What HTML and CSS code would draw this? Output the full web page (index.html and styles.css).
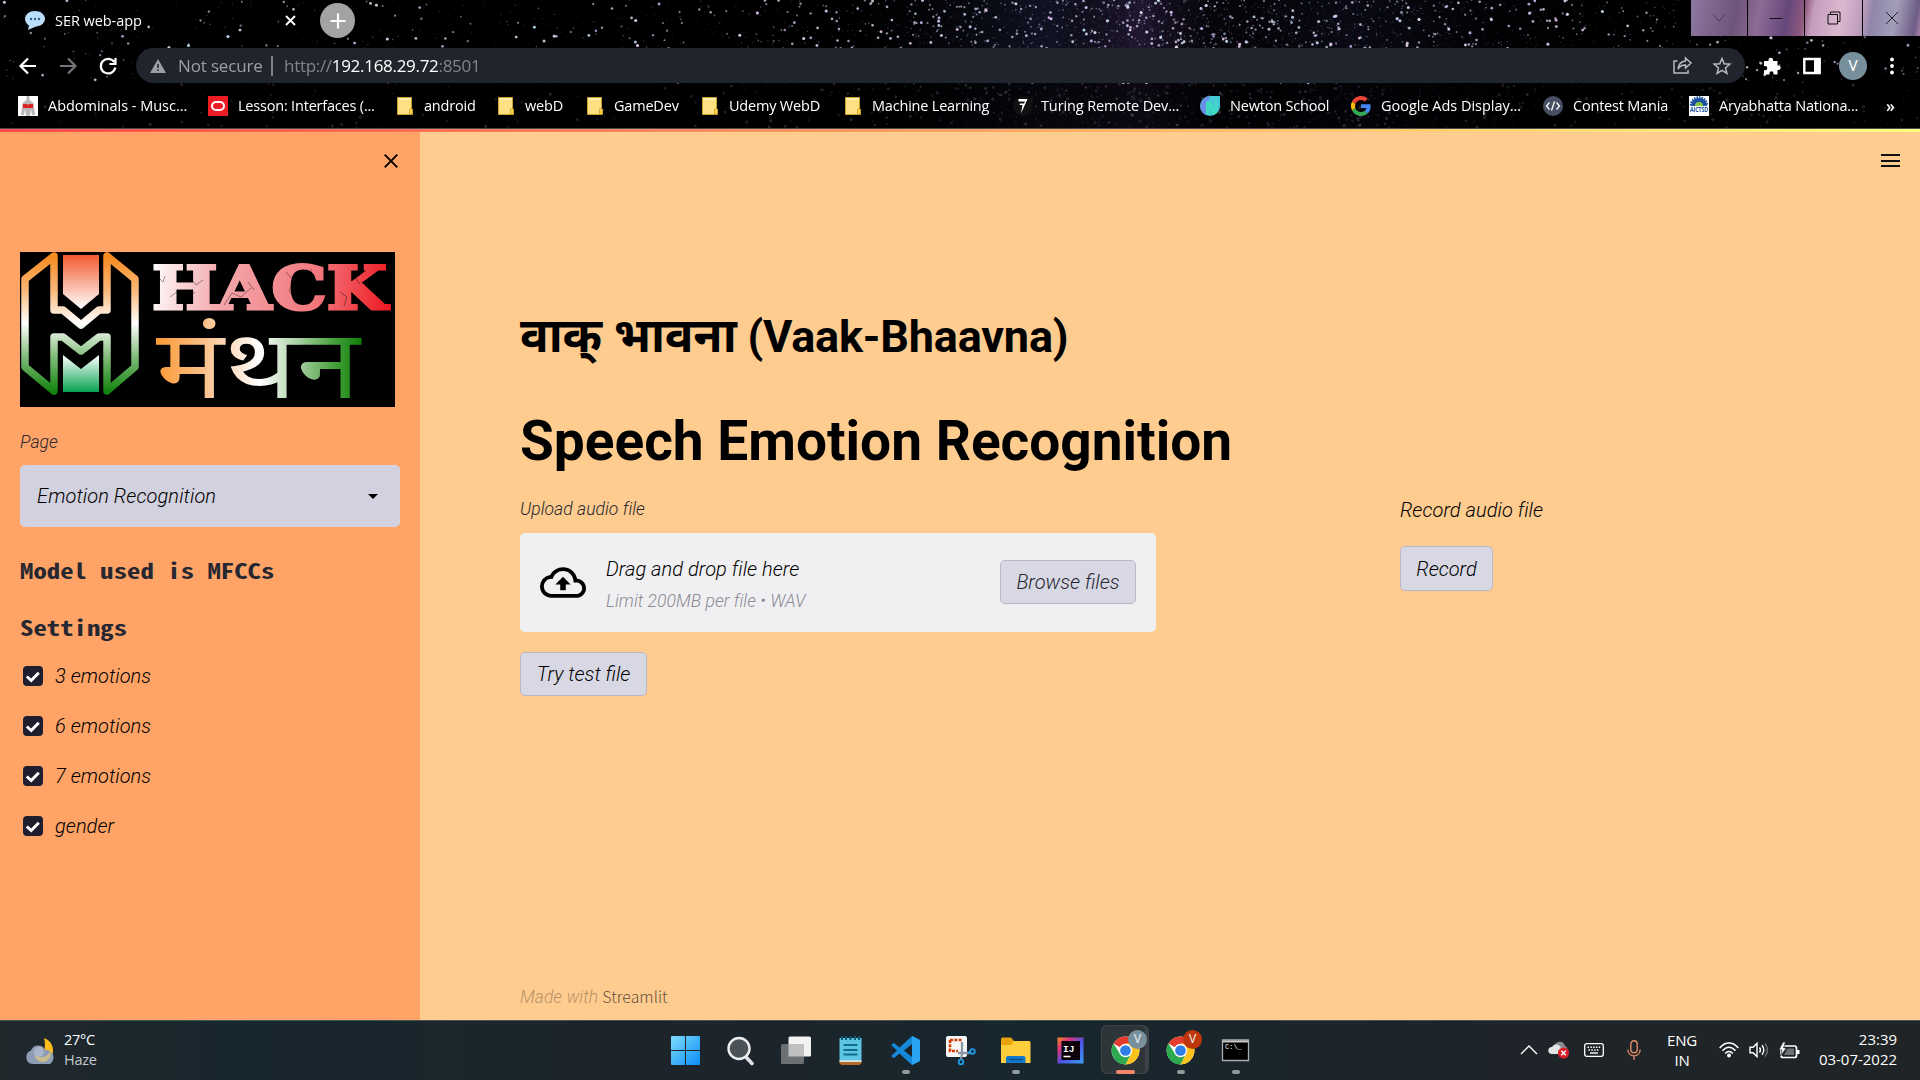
FILE: index.html
```html
<!DOCTYPE html>
<html lang="en">
<head>
<meta charset="utf-8">
<title>SER web-app</title>
<link rel="stylesheet" href="styles.css">
</head>
<body>
<svg class="defs" width="0" height="0" aria-hidden="true">
  <defs>
    <symbol id="folder" viewBox="0 0 16 18"><path d="M0.5 .5h14v11l1 1v5H.5z" fill="#ffe082" stroke="#c9a227"/><path d="M1 1h13v2H1z" fill="#ffeeb0"/><path d="M12.500 12v5h3v-5z" fill="#ffd54f" stroke="#b8901c" stroke-width=".6"/></symbol>
    <symbol id="check" viewBox="0 0 20 20"><rect width="20" height="20" rx="4" fill="#1e1e2f"/><path d="M3.800 10.500l4.400 4 7.600-7.800" fill="none" stroke="#fff" stroke-width="2.900"/></symbol>
    <symbol id="chrome" viewBox="0 0 48 48">
      <circle cx="24" cy="24" r="23" fill="#fff"/>
      <path d="M24 24 4.080 12.500A23 23 0 0 1 43.920 12.500L44 13.500H24z" fill="#e33b2e"/>
      <path d="M43.920 12.500A23 23 0 0 1 24 47L33.500 29.500 24 13.500V12.500z" fill="#fcc31e"/>
      <path d="M4.080 12.500A23 23 0 0 0 24 47L33.100 29.250 24 34.500 14.900 29.250z" fill="#2da94f"/>
      <circle cx="24" cy="24" r="11" fill="#fff"/><circle cx="24" cy="24" r="8.800" fill="#2f7de9"/>
    </symbol>
  </defs>
</svg>
<header class="browser">
  <canvas class="stars" id="stars" width="1920" height="128"></canvas>
  <div class="tabs">
    <div class="tab">
      <svg class="tab-icon" viewBox="0 0 20 19"><path d="M10 0c5.500 0 10 3.500 10 7.800s-4.500 7.700-9 7.700L3 19l1-4.500C1.500 13 0 10.500 0 7.800 0 3.500 4.500 0 10 0z" fill="#bbdefb"/><g fill="#2f5d8a"><circle cx="6" cy="8" r="1.200"/><circle cx="10" cy="8" r="1.200"/><circle cx="14" cy="8" r="1.200"/></g></svg>
      <span class="tab-title">SER web-app</span>
      <svg class="tab-close" viewBox="0 0 11 11"><path d="M1 1l9 9M10 1l-9 9" stroke="#fff" stroke-width="1.900"/></svg>
    </div>
    <div class="new-tab"><svg viewBox="0 0 16 16"><path d="M8 .5v15M.5 8h15" stroke="#fff" stroke-width="2.200"/></svg></div>
    <div class="window-buttons">
      <div class="wb"><svg viewBox="0 0 14 14"><path d="M1 3.500l6 6.500 6-6.500" /></svg></div>
      <div class="wb"><svg viewBox="0 0 14 14"><path d="M.5 7.500h13" /></svg></div>
      <div class="wb"><svg viewBox="0 0 14 14"><path d="M1 3.500h9.500V13H1zM3.500 3.500V1H13v9.500h-2.500"/></svg></div>
      <div class="wb"><svg viewBox="0 0 14 14"><path d="M1 1l12 12M13 1L1 13"/></svg></div>
    </div>
  </div>
  <div class="toolbar">
    <div class="nav">
      <svg viewBox="0 0 18 18"><path d="M17 9H2M9 1.500L1.500 9 9 16.500" stroke="#fff"/></svg>
      <svg viewBox="0 0 18 18"><path d="M1 9h15M9 1.500L16.500 9 9 16.500" stroke="#72757a"/></svg>
      <svg viewBox="0 0 18 18"><path d="M15.300 5.200A7.300 7.300 0 1 0 16.300 10.500M16.500 1v6h-6" stroke="#fff"/></svg>
    </div>
    <div class="omnibox">
      <svg class="warn" viewBox="0 0 16 14"><path d="M8 0l8 14H0z" fill="#9aa0a6"/><path d="M8 5v4M8 10.500v1.600" stroke="#20242c" stroke-width="1.500"/></svg>
      <span class="not-secure">Not secure</span>
      <span class="divider"></span>
      <span class="url">http://<b>192.168.29.72</b>:8501</span>
      <svg class="share" viewBox="0 0 19 17"><path d="M4.500 4H1v12h14v-3M12.500 1l5.500 5-5.500 5V8C8.500 8 6.500 9.500 5 12 5.500 7.500 8 4.500 12.500 4z"/></svg>
      <svg class="star" viewBox="0 0 18 18"><path d="M9 1.500l2.200 5.300 5.600.4-4.300 3.700 1.400 5.500L9 13.400l-4.900 3 1.400-5.500L1.200 7.200l5.600-.4z"/></svg>
    </div>
    <div class="actions">
      <svg viewBox="0 0 18 18"><path d="M1 4h4.500V3a2.300 2.300 0 0 1 4.600 0v1h4.400v4.500h1a2.200 2.200 0 0 1 0 4.400h-1V17.500H10.500v-1.200a2 2 0 0 0-4 0v1.200H1v-4.200h1.200a2.100 2.100 0 0 0 0-4.200H1z" fill="#fff"/></svg>
      <svg viewBox="0 0 18 18"><path d="M1.300 2h15.400v14H1.300z" fill="none" stroke="#fff" stroke-width="2.400"/><path d="M11 2h6v14h-6z" fill="#fff"/></svg>
      <span class="avatar">V</span>
      <svg viewBox="0 0 18 18"><g fill="#fff"><circle cx="9" cy="2.500" r="1.900"/><circle cx="9" cy="9" r="1.900"/><circle cx="9" cy="15.500" r="1.900"/></g></svg>
    </div>
  </div>
  <nav class="bookmarks">
    <a><svg viewBox="0 0 20 20"><path fill="#fff" d="M0 0h20v20H0z"/><path d="M8.500 0h3v4l4 3 1.500 12h-3l-1-6-1 7H8l-1-7-1 6H3L4.500 7l4-3z" fill="#b9b9b9"/><path d="M5 8h4l1 1 1-1h4v4H5z" fill="#dc2626"/></svg><span class="wide">Abdominals - Musc...</span></a>
    <a><svg viewBox="0 0 20 20"><path fill="#ee1c25" d="M0 0h20v20H0z"/><rect x="4" y="6" width="12" height="8" rx="4" fill="none" stroke="#fff" stroke-width="2"/></svg><span>Lesson: Interfaces (...</span></a>
    <a class="dir"><svg><use href="#folder"/></svg><span>android</span></a>
    <a class="dir"><svg><use href="#folder"/></svg><span>webD</span></a>
    <a class="dir"><svg><use href="#folder"/></svg><span>GameDev</span></a>
    <a class="dir"><svg><use href="#folder"/></svg><span>Udemy WebD</span></a>
    <a class="dir"><svg><use href="#folder"/></svg><span>Machine Learning</span></a>
    <a class="turing"><svg viewBox="0 0 20 20"><circle cx="10" cy="10" r="10" fill="#111"/><path d="M5.500 3h9L8 17.500l1.500-8.500H6.500L7 7.500h4L12 5.500H5.500z" fill="#fff"/></svg><span>Turing Remote Dev...</span></a>
    <a><svg viewBox="0 0 20 20"><path d="M10 0h10v10a10 10 0 1 1-10-10z" fill="#45c8d6"/><path d="M10 0A10 10 0 0 0 6 19z" fill="#6b8fe8"/><path d="M6 5l4 0 5 9V4h2v13l-4 2-4-7v7l-3-1z" fill="#3fdcc0"/></svg><span>Newton School</span></a>
    <a><svg viewBox="0 0 48 48"><path fill="#ea4335" d="M24 9.500c3.500 0 6.700 1.200 9.200 3.600l6.900-6.900C35.900 2.400 30.500 0 24 0 14.600 0 6.500 5.400 2.600 13.200l8 6.200C12.400 13.700 17.700 9.500 24 9.500z"/><path fill="#4285f4" d="M47 24.500c0-1.600-.2-3.100-.4-4.500H24v9h12.900c-.6 3-2.300 5.500-4.800 7.200l7.700 6C44.400 38 47 31.800 47 24.500z"/><path fill="#fbbc05" d="M10.500 28.600a14.500 14.500 0 0 1 0-9.200l-8-6.200a24 24 0 0 0 0 21.600z"/><path fill="#34a853" d="M24 48c6.500 0 11.900-2.100 15.900-5.800l-7.700-6c-2.200 1.500-5 2.300-8.200 2.300-6.300 0-11.600-4.200-13.500-9.900l-8 6.200C6.500 42.600 14.600 48 24 48z"/></svg><span class="wide">Google Ads Display...</span></a>
    <a><svg viewBox="0 0 20 20"><circle cx="10" cy="10" r="10" fill="#475062"/><path d="M6.500 6.500L3.500 10l3 3.500M13.500 6.500l3 3.500-3 3.500M11.500 5.500l-3 9" fill="none" stroke="#fff" stroke-width="1.300"/></svg><span>Contest Mania</span></a>
    <a><svg viewBox="0 0 20 20"><path fill="#fff" d="M0 0h20v20H0z"/><path d="M2 10a8 8 0 0 1 16 0z" fill="#1b4fa0"/><path d="M2 9.500a8 8 0 0 1 16 0" fill="none" stroke="#1b4fa0" stroke-width="2.500" stroke-dasharray="1.500 1"/><path d="M6 10a4 4 0 0 1 8 0z" fill="#8cc63f"/><text x="1" y="16" font-size="6.500" textLength="18" lengthAdjust="spacingAndGlyphs" font-weight="bold" fill="#1b4fa0">AICTSD</text></svg><span>Aryabhatta Nationa...</span></a>
    <b class="more">»</b>
  </nav>
</header>
<div class="decoration"></div>
<div class="app">
  <aside class="sidebar">
    <svg class="close" viewBox="0 0 14 14"><path d="M.7.7l12.600 12.600M13.300.7L.7 13.300" stroke="#000" stroke-width="1.900"/></svg>
    <svg class="logo" viewBox="0 0 375 155">
      <defs>
        <linearGradient id="tri" x1="0" y1="0" x2="0" y2="1"><stop offset="0" stop-color="#f58a1f"/><stop offset=".25" stop-color="#f9b878"/><stop offset=".5" stop-color="#fff"/><stop offset=".75" stop-color="#7fbb78"/><stop offset="1" stop-color="#15840f"/></linearGradient>
        <linearGradient id="top" x1="0" y1="0" x2="0" y2="1"><stop offset="0" stop-color="#f2592f"/><stop offset="1" stop-color="#fff"/></linearGradient>
        <linearGradient id="bot" x1="0" y1="0" x2="0" y2="1"><stop offset="0" stop-color="#fff"/><stop offset="1" stop-color="#06a351"/></linearGradient>
        <linearGradient id="red" gradientUnits="userSpaceOnUse" x1="131" y1="0" x2="370" y2="25"><stop offset="0" stop-color="#fff"/><stop offset=".3" stop-color="#f3a8ac"/><stop offset=".7" stop-color="#f2787d"/><stop offset="1" stop-color="#ee1c25"/></linearGradient>
        <linearGradient id="flag" gradientUnits="userSpaceOnUse" x1="132" y1="0" x2="340" y2="0"><stop offset="0" stop-color="#fb962d"/><stop offset=".25" stop-color="#fcc08a"/><stop offset=".52" stop-color="#fff"/><stop offset=".7" stop-color="#a8d0a3"/><stop offset=".88" stop-color="#44a03a"/><stop offset="1" stop-color="#10800a"/></linearGradient>
      </defs>
      <path fill="#000" d="M0 0h375v155H0z"/>
      <g fill="none" stroke="url(#tri)" stroke-width="7.500" stroke-linejoin="round">
        <path d="M34 4 5 27v88l29 24V85h9l18 14 18-14h8v54l28-24V27L87 4v54h-8L61 73 43 58h-9V4z"/>
      </g>
      <path d="M43 3h36v39L61 57 43 42z" fill="url(#top)"/><path d="M43 103l18 14 18-14v37H43z" fill="url(#bot)"/>
      <text class="hack" x="132" y="57" textLength="235" lengthAdjust="spacingAndGlyphs" fill="url(#red)" stroke="url(#red)">HACK</text>
      <path d="M135 22l8 8 2-6M150 45l8-6 7 9 10-8M170 25l6 8 7-5M204 53l8-12 9 4 10-9M228 30l6 8M266 20l8 9-5 10 7 8M292 17l-6 8 8 6M320 40l7 5-3 9M334 24l6 8" fill="none" stroke="#000" stroke-width=".6" opacity=".65"/>
      <text class="manthan" x="136" y="123.700" textLength="204" lengthAdjust="spacingAndGlyphs" transform="scale(1 1.180)" fill="url(#flag)">मंथन</text>
    </svg>
    <div class="label page-label">Page</div>
    <div class="select"><span>Emotion Recognition</span><svg viewBox="0 0 10 5"><path d="M0 0h10L5 5z"/></svg></div>
    <h3 class="mono">Model used is MFCCs</h3>
    <h3 class="mono settings">Settings</h3>
    <div class="checks">
      <div class="check"><svg><use href="#check"/></svg><span>3 emotions</span></div>
      <div class="check"><svg><use href="#check"/></svg><span>6 emotions</span></div>
      <div class="check"><svg><use href="#check"/></svg><span>7 emotions</span></div>
      <div class="check"><svg><use href="#check"/></svg><span>gender</span></div>
    </div>
  </aside>
  <main class="main">
    <div class="menu"><i></i><i></i><i></i></div>
    <h2 class="hindi"><span lang="hi">वाक् भावना</span> (Vaak-Bhaavna)</h2>
    <h1 class="title">Speech Emotion Recognition</h1>
    <div class="columns">
      <section class="upload">
        <div class="label">Upload audio file</div>
        <div class="dropzone">
          <svg class="cloud" viewBox="0 0 24 16"><path d="M19.350 6.040A7.490 7.490 0 0 0 12 0C9.110 0 6.600 1.640 5.350 4.040A5.994 5.994 0 0 0 0 10c0 3.310 2.690 6 6 6h13c2.760 0 5-2.240 5-5 0-2.640-2.050-4.780-4.650-4.960zM19 14H6c-2.210 0-4-1.790-4-4s1.790-4 4-4h.710C7.370 3.690 9.480 2 12 2c3.040 0 5.500 2.460 5.500 5.500V8H19c1.660 0 3 1.340 3 3s-1.340 3-3 3z"/><path d="M8 9h2.550v3h2.900V9H16l-4-4z"/></svg>
          <div class="drop-text"><span class="drop-main">Drag and drop file here</span><span class="drop-limit">Limit 200MB per file • WAV</span></div>
          <button class="btn browse">Browse files</button>
        </div>
        <button class="btn try">Try test file</button>
      </section>
      <section class="record">
        <p>Record audio file</p>
        <button class="btn rec">Record</button>
      </section>
    </div>
    <footer class="made">Made with <b>Streamlit</b></footer>
  </main>
</div>
<footer class="taskbar">
  <div class="weather">
    <svg viewBox="0 0 30 27"><path d="M19 0c9 3 12 14 6 21H14C20 16 21 7 19 0z" fill="#fbbc1e"/><path d="M7 26a7 7 0 0 1-1-13.500C8 6 18 6 20 12c8-1 12 9 5 14z" fill="#8e9db3"/><path d="M10 13c2 8 12 8 15 0 3 3-1 11-7 11S8 19 10 13z" fill="#c8bb8c"/><circle cx="14" cy="14" r="5" fill="#a9b6cb"/></svg>
    <div><span>27°C</span><span class="haze">Haze</span></div>
  </div>
  <div class="apps">
    <div><svg viewBox="0 0 29 29"><defs><linearGradient id="win" x1="0" y1="0" x2="1" y2="1"><stop offset="0" stop-color="#7fdcff"/><stop offset="1" stop-color="#0a8df5"/></linearGradient></defs><path d="M0 1q0-1 1-1h13v14H0zM15 0h13q1 0 1 1v13H15zM0 15h14v14H1q-1 0-1-1zM15 15h14v13q0 1-1 1H15z" fill="url(#win)"/></svg></div>
    <div><svg viewBox="0 0 29 29"><path d="M19.500 20.500l6.500 7" stroke="#dfe3e6" stroke-width="3.600" stroke-linecap="round"/><circle cx="13" cy="12.500" r="10.500" fill="#4b5358" stroke="#eceeef" stroke-width="2.400"/></svg></div>
    <div><svg viewBox="0 0 29 29"><rect x="7.500" y=".5" width="22.500" height="20" rx="1.500" fill="#f2f2f2"/><rect x="0" y="8" width="23" height="20" rx="1.500" fill="#6c7073"/><path d="M7.500 8H23v12.500H7.500z" fill="#bfc0c1"/></svg></div>
    <div><svg viewBox="0 0 29 29"><path d="M3.500 2h22v24h-22z" fill="#5cc6e2"/><path d="M3.500 25h22v2.500l-2 1.500h-18l-2-1.500z" fill="#b06a2c"/><path d="M3.500 24.500h22v1.300h-22z" fill="#fff"/><path d="M7.500 9h14M7.500 14h14M7.500 18.500h14" stroke="#116d8a" stroke-width="2"/><path d="M6 0v4M10 0v4M14.500 0v4M19 0v4M23 0v4" stroke="#0b5c78" stroke-width="2"/></svg></div>
    <div class="running"><svg viewBox="0 0 29 29"><path d="M21 0l8 4v21l-8 4L8.500 17.500 3 22l-3-2 6-5.500L0 9l3-2 5.500 4.500z" fill="#1588d8"/><path d="M21 8v13l-8-6.500z" fill="#1b242a"/><path d="M21 0l8 4v21l-8 4z" fill="#2ba3f3"/></svg></div>
    <div><svg viewBox="0 0 29 29"><rect width="21" height="21" rx="2" fill="#f6f6f6"/><path d="M4 4h12M4 4v11h8" fill="none" stroke="#d83b01" stroke-width="2.600" stroke-dasharray="3 1.300"/><path d="M16 6v12l-1 5M12 17h12" fill="none" stroke="#8a98a6" stroke-width="2.300"/><circle cx="15" cy="26" r="2.300" fill="none" stroke="#1e9be8" stroke-width="1.800"/><path d="M22 17l3-1" stroke="#1e9be8" stroke-width="2"/><circle cx="26.500" cy="15.500" r="2.300" fill="none" stroke="#1e9be8" stroke-width="1.800"/></svg></div>
    <div class="running"><svg viewBox="0 0 29 29"><path d="M0 3q0-1.500 1.500-1.500H10l3 3.500v4H0z" fill="#e8a30c"/><path d="M0 9h10l3-4h15q1.500 0 1.500 1.500V27H0z" fill="#ffce3d"/><path d="M5 27v-5q0-2 2-2h15.500q2 0 2 2v5z" fill="#1279c9"/><path d="M8 23.500h14" stroke="#0b4f8c" stroke-width="1.500"/></svg></div>
    <div><svg viewBox="0 0 29 29"><defs><linearGradient id="ij" x1="0" y1="0" x2="1" y2="1"><stop offset="0" stop-color="#f88a22"/><stop offset=".25" stop-color="#e0357c"/><stop offset=".55" stop-color="#4a55e8"/><stop offset="1" stop-color="#3da0f6"/></linearGradient></defs><path d="M1.500 1.500h26v26h-26z" fill="url(#ij)"/><path d="M5.500 5h18.500v19H5.500z" fill="#0b0009"/><text class="ij" x="7" y="15.500">IJ</text><path d="M7.500 20.500h7" stroke="#fff" stroke-width="1.500"/></svg></div>
    <div class="running active"><svg><use href="#chrome"/></svg><em class="badge">V</em></div>
    <div class="running"><svg><use href="#chrome"/></svg><em class="badge orange">V</em></div>
    <div class="running"><svg viewBox="0 0 29 29"><path d="M1.500 4h26v20.500h-26z" fill="#000" stroke="#a9adb0" stroke-width="1.300"/><path d="M2 4.500h25v2H2z" fill="#c4c7ca"/><text class="prompt" x="4" y="13">C:\_</text></svg></div>
  </div>
  <div class="tray">
    <svg width="18" height="10" viewBox="0 0 18 10"><path d="M1 9l8-8 8 8" fill="none" stroke="#fff" stroke-width="1.400"/></svg>
    <svg width="22" height="18" viewBox="0 0 22 18"><path d="M6 5C9-1 16 0 17 5c3 1 3 5 1 6H6z" fill="#898d90"/><path d="M4 13c-5 0-5-7 0-7 2-4 8-3 9 1l4 2v4z" fill="#e3e5e6"/><circle cx="15.500" cy="12" r="5.600" fill="#d91f2a"/><path d="M13.300 9.800l4.400 4.400M17.700 9.800l-4.400 4.400" stroke="#fff" stroke-width="1.400"/></svg>
    <svg width="20" height="14" viewBox="0 0 20 14"><rect x=".7" y=".7" width="18.600" height="12.600" rx="2" fill="none" stroke="#fff" stroke-width="1.300"/><path d="M3.500 4.200h13M4.500 7h11" stroke="#fff" stroke-width="1.500" stroke-dasharray="1.500 1.300"/><path d="M6 10h8" stroke="#fff" stroke-width="1.400"/></svg>
    <svg width="14" height="20" viewBox="0 0 14 20"><rect x="3.800" y=".8" width="6.400" height="12" rx="3.200" fill="none" stroke="#e08a66" stroke-width="1.400"/><path d="M.8 9.500C1 18 13 18 13.200 9.500M7 16v4" fill="none" stroke="#e08a66" stroke-width="1.400"/></svg>
    <div class="lang"><span>ENG</span><span>IN</span></div>
    <svg width="20" height="16" viewBox="0 0 20 16"><g fill="none" stroke="#fff" stroke-width="1.500"><path d="M.7 6C6-.6 14-.6 19.300 6M3.500 8.800C7.500 4 12.500 4 16.500 8.800M6.200 11.500c2.300-2.700 5.300-2.700 7.600 0"/></g><circle cx="10" cy="13.500" r="1.900" fill="#fff"/></svg>
    <svg width="20" height="16" viewBox="0 0 20 16"><g fill="none" stroke="#fff" stroke-width="1.400"><path d="M1 5.300h3L8 1.500v13L4 10.700H1zM10.500 5.500q2 2.500 0 5M13 3.300q3.700 4.700 0 9.400"/><path d="M16 1.500q5 6.500 0 13" stroke="#6a7175"/></g></svg>
    <svg width="21" height="17" viewBox="0 0 21 17"><rect x="2" y="4" width="15.500" height="11.500" rx="2" fill="none" stroke="#fff" stroke-width="1.700"/><path d="M8.500 6.500H15v6.500H5z" fill="#fff" opacity=".35"/><path d="M18 8h2.500v4H18z" fill="#fff"/><path d="M4 0L0 8h3L1.500 14 7.500 6H4.500L6.500 0z" fill="#fff" stroke="#1b242a" stroke-width=".7"/></svg>
    <div class="clock"><span>23:39</span><span>03-07-2022</span></div>
  </div>
</footer>
<script src="stars.js"></script>
</body>
</html>
```
FILE: styles.css
```css
* { box-sizing: border-box; }
html, body { margin: 0; height: 100%; overflow: hidden; }
body { display: flex; flex-direction: column; width: 1920px; height: 1080px; font-family: Roboto, "Noto Sans Devanagari", sans-serif; background: #ffcc90; }
svg { display: block; flex: none; overflow: visible; }
.defs { position: absolute; }

.browser { position: relative; height: 129px; background: #000; border-bottom: 1px solid #4a4c50; color: #fff; font-family: "Open Sans", "Noto Sans", sans-serif; isolation: isolate; }
.stars { position: absolute; inset: 0; z-index: -1; }
.tabs { display: flex; height: 42px; }
.tab { display: flex; align-items: center; width: 298px; height: 41px; padding-left: 25px; }
.tab-icon { width: 20px; height: 19px; }
.tab-title { font-size: 14.500px; letter-spacing: -.05px; margin-left: 10px; width: 230px; }
.tab-close { width: 11px; height: 11px; }
.new-tab { width: 35px; height: 35px; margin: 3px 0 0 22px; border-radius: 50%; background: #a3a3a6; display: grid; place-items: center; }
.new-tab svg { width: 16px; height: 16px; }
.window-buttons { display: grid; grid-template-columns: 57px 57px 58px 57px; height: 36px; margin-left: auto; background: linear-gradient(100deg, #8d78a0 0, #6d557a 20%, #8d6b95 30%, #66477b 42%, #8f5b80 49%, #c49dbd 53%, #dcb8d0 65%, #bd9cbb 74%, #8f86aa 78%, #a39db8 88%, #6d5d86 97%, #a982a8); }
.wb { display: grid; place-items: center; border-right: 1px solid #000; }
.wb:last-child { border: 0; }
.wb svg { width: 14px; height: 14px; fill: none; stroke: #111; stroke-width: 1; }
.wb:first-child svg { stroke: #3d3046; stroke-width: .8; }
.wb:last-child svg { stroke: #28252e; }
.toolbar { display: flex; align-items: center; height: 47px; }
.nav { display: flex; flex: none; gap: 22px; width: 136px; padding-left: 19px; }
.nav svg { width: 18px; height: 18px; fill: none; stroke-width: 2.200; }
.omnibox { display: flex; flex: none; align-items: center; width: 1609px; height: 35px; border-radius: 18px; background: #20242c; padding-left: 14px; color: #9aa0a6; font-size: 17px; }
.warn { width: 16px; height: 14px; }
.not-secure { width: 93px; margin-left: 12px; letter-spacing: -.15px; white-space: nowrap; }
.divider { width: 2px; height: 20px; background: #7d8187; }
.url { margin-left: 11px; color: #81868c; letter-spacing: -.3px; }
.url b { font-weight: 400; color: #fff; }
.share { width: 19px; height: 17px; margin-left: auto; }
.star { width: 18px; height: 18px; margin: 0 14px 0 21px; }
.share, .star { fill: none; stroke: #b8bbbf; stroke-width: 1.500; }
.actions { display: flex; flex: none; align-items: center; margin-left: 18px; }
.actions svg { width: 18px; height: 18px; margin-right: 22px; }
.actions svg + svg { margin-right: 18px; }
.avatar { width: 28px; height: 28px; border-radius: 50%; background: #78909c; font: 15px/28px Roboto, sans-serif; text-align: center; margin-right: 16px; }
.actions .avatar + svg { margin-right: 0; }
.bookmarks { display: grid; grid-template-columns: 190px 189px 101px 89px 115px 143px 168px 187px 151px 192px 146px 197px 20px; align-items: center; height: 33px; padding-left: 18px; font-size: 14.500px; letter-spacing: -.2px; white-space: nowrap; }
.bookmarks a { display: flex; align-items: center; gap: 10px; }
.bookmarks svg { width: 20px; height: 20px; }
.bookmarks .dir svg { width: 16px; height: 18px; }
.bookmarks .dir { gap: 11px; }
.bookmarks .turing { gap: 8px; letter-spacing: -.12px; }
.bookmarks .wide { letter-spacing: -.02px; }
.more { font-size: 16px; line-height: 18px; font-weight: 600; }

.decoration { height: 3px; background: linear-gradient(90deg, #ff4b4b, #fffd80); }
.app { display: flex; height: 888px; font-style: italic; font-weight: 300; font-size: 20px; color: #000; letter-spacing: .05px; }
.sidebar { width: 420px; background: #ffa366; padding: 22px 20px 0; }
.close { width: 14px; height: 14px; margin-left: 364px; }
.logo { width: 375px; height: 155px; margin-top: 84px; }
.hack { font: bold 60px "DejaVu Serif", serif; stroke-width: 3px; }
.manthan { font: 400 82px "Noto Sans Devanagari", "Noto Sans", sans-serif; }
.label { font-size: 17.500px; line-height: 26px; color: #262730; }
.page-label { margin-top: 22px; height: 36px; }
.select { display: flex; align-items: center; justify-content: space-between; height: 62px; padding: 0 22px 0 17px; border-radius: 5px; background: #d2d1df; letter-spacing: .1px; }
.select svg { width: 10px; height: 5px; }
.mono { width: 298px; margin: 30px 0 0; font: bold 21px/26px "Noto Sans Mono CJK SC", "Liberation Mono", monospace; color: #262730; letter-spacing: 0; transform: scaleX(1.275); transform-origin: left; white-space: nowrap; }
.mono.settings { margin-top: 31px; }
.checks { display: flex; flex-direction: column; gap: 20px; margin-top: 21px; padding-left: 3px; }
.check { display: flex; align-items: center; gap: 12px; height: 30px; }
.check svg { width: 20px; height: 20px; }

.main { position: relative; flex: 1; display: flex; flex-direction: column; padding: 22px 20px 0 100px; }
.menu { display: flex; flex-direction: column; justify-content: space-between; width: 19px; height: 13px; align-self: flex-end; }
.menu i { height: 2px; background: #111; }
.hindi { margin: 142px 0 0; height: 54px; font: bold 45px/54px Roboto, "Noto Sans Devanagari", sans-serif; letter-spacing: -.2px; white-space: nowrap; }
.hindi span { font-size: 47.700px; }
.title { margin: 45px 0 0; font: bold 55px/66px Roboto, sans-serif; letter-spacing: 0; }
.columns { display: flex; gap: 244px; margin-top: 22px; }
.upload { width: 636px; }
.dropzone { display: flex; align-items: center; height: 99px; margin-top: 11px; padding: 0 20px; border-radius: 5px; background: #f0f0f3; }
.cloud { width: 46px; height: 31px; }
.drop-text { display: flex; flex-direction: column; margin-left: 20px; gap: 4px; padding-top: 2px; }
.drop-main { line-height: 30px; height: 30px; }
.drop-limit { font-size: 17.500px; line-height: 26px; color: #8b8a92; }
.btn { height: 44px; padding: 0; border: 1px solid #b9b8c6; border-radius: 5px; background: #d8d8e4; font: italic 300 20px/30px Roboto, sans-serif; color: #000; }
.browse { width: 136px; margin: 0 0 1px auto; color: #262730; }
.try { width: 127px; margin-top: 20px; display: block; }
.rec { width: 93px; height: 45px; display: block; }
.record p { margin: 0 0 21px; line-height: 29px; }
.made { margin-top: auto; padding-bottom: 9px; font-size: 17.500px; line-height: 27px; color: #b79468; }
.made b { font: 300 15.800px "Noto Sans CJK SC", sans-serif; letter-spacing: .05px; color: #614f3b; }

.taskbar { display: flex; height: 60px; background: linear-gradient(90deg, #20282c, #18262d 12%, #1d242b 37%, #17262d 55%, #1e2429 78%, #202426); border-top: 1px solid #45535a; color: #fff; font: 15px/20px "Open Sans", "Noto Sans", sans-serif; }
.weather { display: flex; width: 658px; padding: 9px 0 0 25px; gap: 9px; }
.weather svg { width: 30px; height: 27px; margin-top: 8px; }
.weather span, .lang span, .clock span { display: block; }
.weather { font-size: 14.500px; letter-spacing: -.3px; }
.haze { color: #c4c8ca; }
.apps { display: grid; grid-template-columns: repeat(11, 55px); }
.apps > div { position: relative; display: grid; place-items: center; height: 58px; }
.apps svg { width: 29px; height: 29px; }
.running::after { content: ""; position: absolute; left: 24px; top: 49px; width: 8px; height: 4px; border-radius: 2px; background: #92989b; }
.active::before { content: ""; position: absolute; inset: 4px 4px 5px 3px; border-radius: 6px; background: #2d3539; border: 1px solid #3b4347; border-right-width: 4px; }
.active::after { left: 18px; width: 19px; background: #f4866a; }
.active svg { z-index: 1; }
.badge { position: absolute; z-index: 2; left: 30px; top: 9px; width: 19px; height: 19px; border-radius: 50%; background: #78909c; color: #e9edef; font: 12px/19px Roboto, sans-serif; text-align: center; }
.orange { background: #bf360c; }
.ij { font: bold 9.500px "Liberation Mono", monospace; fill: #fff; }
.prompt { font: 7px "Liberation Mono", monospace; fill: #fff; }
.tray { display: grid; grid-template-columns: 36px 24px 45px 35px 62px 32px 27px 34px 91px; margin-left: auto; padding-right: 23px; place-items: center; height: 58px; }
.lang { text-align: center; letter-spacing: -.2px; }
.clock { justify-self: end; text-align: right; letter-spacing: -.02px; white-space: nowrap; padding-bottom: 2px; }
```
FILE: stars.js
```js
// Paints the starfield behind the tab strip and toolbar.
const canvas = document.getElementById('stars');
const ctx = canvas.getContext('2d');
let seed = 20220703;
const rnd = () => {
  seed = (seed * 1664525 + 1013904223) >>> 0;
  return seed / 4294967296;
};
const glow = (x, w, color) => {
  const g = ctx.createLinearGradient(x - w, 0, x + w, 0);
  g.addColorStop(0, 'rgba(0,0,0,0)');
  g.addColorStop(0.5, color);
  g.addColorStop(1, 'rgba(0,0,0,0)');
  ctx.fillStyle = g;
  ctx.fillRect(x - w, 0, w * 2, 128);
};
glow(1050, 230, 'rgba(24,28,52,.7)');
glow(1140, 110, 'rgba(56,38,80,.65)');
glow(1350, 300, 'rgba(16,16,34,.6)');
ctx.fillStyle = 'rgba(0,0,0,.6)';
ctx.fillRect(0, 83, 1920, 45);
for (let i = 0; i < 14000; i++) {
  const x = rnd() * 1920;
  const y = rnd() * 128;
  const band = Math.exp(-(((x - 1180) / 330) ** 2));
  if (rnd() > 0.12 + band * 0.88) continue;
  const bright = rnd() ** 3;
  const size = 0.7 + bright * 1.4;
  const dim = y > 83 ? 0.18 : 1;
  ctx.fillStyle = `rgba(${200 + rnd() * 55},${200 + rnd() * 40},255,${(0.16 + bright * 0.75) * dim})`;
  ctx.beginPath();
  ctx.arc(x, y, size * 0.75, 0, 7);
  ctx.fill();
}
```
